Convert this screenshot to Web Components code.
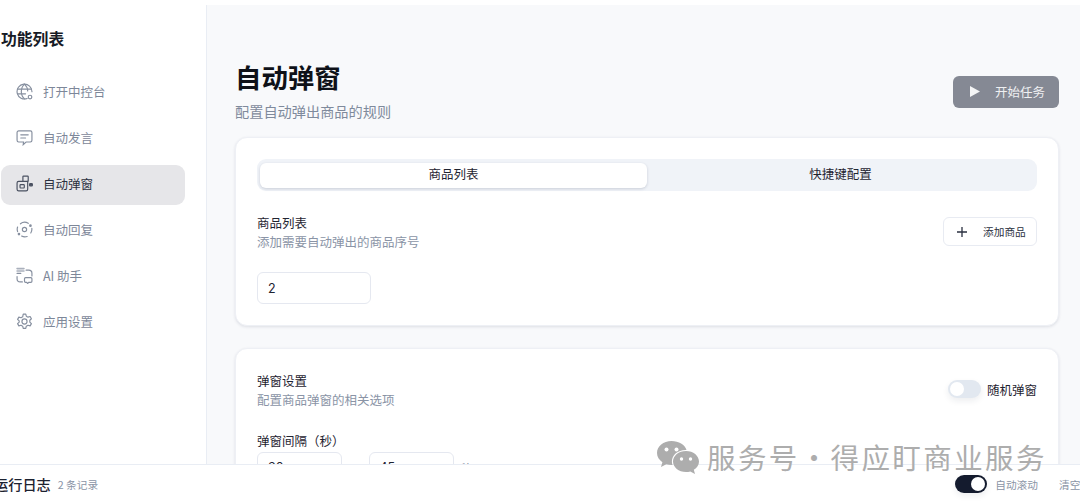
<!DOCTYPE html>
<html lang="zh-CN">
<head>
<meta charset="utf-8">
<title>自动弹窗</title>
<style>
  html, body { margin: 0; height: 100%; overflow: hidden; background: #fff; }
  body {
    font-family: "Noto Sans CJK SC", "Inter", "Noto Sans", sans-serif;
    color: #1a1f2e;
    --muted: #8a94a6;
    --line: #e9edf4;
  }
</style>
</head>
<body>
<app-shell>
  <side-nav slot="nav">
    <nav-item icon="globe">打开中控台</nav-item>
    <nav-item icon="chat">自动发言</nav-item>
    <nav-item icon="popup" active>自动弹窗</nav-item>
    <nav-item icon="reply">自动回复</nav-item>
    <nav-item icon="ai">AI 助手</nav-item>
    <nav-item icon="gear">应用设置</nav-item>
  </side-nav>
  <popup-page slot="main"></popup-page>
  <log-bar slot="log"></log-bar>
  <water-mark slot="mark"></water-mark>
</app-shell>

<script>
(function () {
  const icons = {
    globe: '<path d="M10.5 14.6A7 7 0 1 1 15 8.2"/><path d="M1.4 5.7h13.2M1.4 10.2h7.6M8 1C5.8 3 5 5.5 5 8s.8 5 3 7M8 1c2 1.900 3 4.200 3 6.500"/><circle cx="13.2" cy="13.2" r="1.7"/>',
    chat: '<path d="M2.5 1.8h11A1.500 1.500 0 0 1 15 3.300v7.400a1.500 1.500 0 0 1-1.500 1.500H9.500l-2.700 2.500.3-2.500H2.500A1.500 1.500 0 0 1 1 10.700V3.300a1.500 1.500 0 0 1 1.500-1.500z"/><path d="M4.500 5.500h7M4.500 8.500h4.500"/>',
    popup: '<rect x="6.5" y="1" width="5" height="5" rx=".6"/><path d="M6.5 6H2.500A1.500 1.500 0 0 0 1 7.500v6A1.500 1.500 0 0 0 2.500 15h7a1.500 1.500 0 0 0 1.500-1.500V6"/><rect x="3.8" y="9" width="4" height="3.2" rx=".6"/><rect x="12.8" y="8" width="2.6" height="2.2" rx=".6" fill="currentColor"/>',
    reply: '<circle cx="8" cy="8" r="2"/><path d="M4.200 2.600C6.200 1 9.200.8 11.500 2.200M14.900 6.800c.2 1.700-.2 3.200-1 4.500M10.500 14.600c-1.800.6-3.700.4-5.200-.4M1.500 10c-.5-1.500-.5-3 0-4.300"/><circle cx="13.6" cy="4.400" r=".7" fill="currentColor"/><circle cx="2.800" cy="12.300" r=".7" fill="currentColor"/>',
    ai: '<path d="M1 1.500h6.500M1 3.700h6.500" stroke-width="1.500" opacity=".7"/><path d="M1 6h3.500"/><path d="M9.500 3H12a3 3 0 0 1 3 3v2.500M1 9v2a3 3 0 0 0 3 3h2"/><path d="M9 10h5a1 1 0 0 1 1 1v2.500a1 1 0 0 1-1 1h-2l-1 1-1-1H9a1 1 0 0 1-1-1V11a1 1 0 0 1 1-1z"/>',
    gear: '<circle cx="8" cy="8" r="2.4"/><path stroke-linejoin="round" d="M6.800 1h2.400l.5 2 1.600.9 2-.6 1.200 2.100-1.500 1.400v1.800l1.500 1.400-1.200 2.100-2-.6-1.600.9-.5 2H6.800l-.5-2-1.600-.9-2 .6-1.200-2.100 1.500-1.400V7.400L1.500 6l1.200-2.100 2 .6 1.600-.9z"/>'
  };

  customElements.define('app-shell', class extends HTMLElement {
    constructor() {
      super();
      this.attachShadow({ mode: 'open' }).innerHTML = `
        <style>
          :host { display: flex; flex-direction: column; height: 501px; overflow: hidden; position: relative; padding-top: 5px; box-sizing: border-box; }
          .top { flex: 1; min-height: 0; display: flex; }
          ::slotted([slot=main]) { flex: 1; min-width: 0; }
        </style>
        <div class="top"><slot name="nav"></slot><slot name="main"></slot></div>
        <slot name="log"></slot>
        <slot name="mark"></slot>`;
    }
  });

  customElements.define('side-nav', class extends HTMLElement {
    constructor() {
      super();
      this.attachShadow({ mode: 'open' }).innerHTML = `
        <style>
          :host { display: block; width: 207px; flex: none; box-sizing: border-box; padding: 22px 21px 0 1px; border-right: 1px solid var(--line); background: #fff; }
          h2 { margin: 0 0 22px; font-size: 15.8px; line-height: 24px; font-weight: 700; color: #171b26; white-space: nowrap; }
          .list { display: flex; flex-direction: column; gap: 6px; }
        </style>
        <h2>功能列表</h2>
        <div class="list"><slot></slot></div>`;
    }
  });

  customElements.define('nav-item', class extends HTMLElement {
    constructor() {
      super();
      const on = this.hasAttribute('active');
      this.attachShadow({ mode: 'open' }).innerHTML = `
        <style>
          :host { display: flex; align-items: center; gap: 10px; box-sizing: border-box; height: 40px; padding: 0 0 4px 15px; border-radius: 9px;
            font-size: 12.5px; white-space: nowrap;
            color: ${on ? '#2a3040' : '#7d8799'}; background: ${on ? '#e6e6e9' : 'transparent'}; }
          svg { width: 17px; height: 17px; flex: none; fill: none; stroke: currentColor; stroke-width: 1.1; stroke-linecap: round; color: ${on ? '#4a5161' : '#868f9f'}; }
        </style>
        <svg viewBox="0 0 16 16">${icons[this.getAttribute('icon')]}</svg>
        <span><slot></slot></span>`;
    }
  });

  customElements.define('ui-card', class extends HTMLElement {
    constructor() {
      super();
      this.attachShadow({ mode: 'open' }).innerHTML = `
        <style>
          :host { display: block; flex: none; background: #fff; border: 1px solid #eef0f5; border-radius: 12px; padding: 21px; box-shadow: 0 1px 3px rgba(30,40,70,.12); }
        </style>
        <slot></slot>`;
    }
  });

  customElements.define('row-head', class extends HTMLElement {
    constructor() {
      super();
      this.attachShadow({ mode: 'open' }).innerHTML = `
        <style>
          :host { display: flex; align-items: center; justify-content: space-between; }
          h3 { margin: 0; font-size: 12.5px; line-height: 18px; font-weight: 400; color: #1f2431; }
          p { margin: 1px 0 0; font-size: 12.5px; line-height: 18px; color: var(--muted); }
        </style>
        <div><h3>${this.getAttribute('title')}</h3><p>${this.getAttribute('sub')}</p></div>
        <slot></slot>`;
    }
  });

  customElements.define('tab-bar', class extends HTMLElement {
    constructor() {
      super();
      this.attachShadow({ mode: 'open' }).innerHTML = `
        <style>
          :host { display: grid; grid-template-columns: 1fr 1fr; height: 32px; box-sizing: border-box; padding: 3.5px 3px; background: #f0f3f8; border-radius: 9px; font-size: 12.5px; color: #1f2431; margin-bottom: 23px; }
          div { display: flex; align-items: center; justify-content: center; border-radius: 6px; padding-bottom: 4px; box-sizing: border-box; }
          .on { background: #fff; box-shadow: 0 1px 3px rgba(30,40,70,.18); }
        </style>
        <div class="on">商品列表</div><div>快捷键配置</div>`;
    }
  });

  customElements.define('text-box', class extends HTMLElement {
    constructor() {
      super();
      this.attachShadow({ mode: 'open' }).innerHTML = `
        <style>
          :host { display: flex; align-items: center; flex: none; box-sizing: border-box; height: 32px; width: ${this.getAttribute('w')}px; padding-left: 10px; border: 1px solid #e5e8f0; border-radius: 6px; background: #fff; font-family: Inter, sans-serif; font-size: 12.5px; color: #1f2431; }
        </style>
        <slot></slot>`;
    }
  });

  customElements.define('toggle-switch', class extends HTMLElement {
    constructor() {
      super();
      const on = this.hasAttribute('on');
      this.attachShadow({ mode: 'open' }).innerHTML = `
        <style>
          :host { display: flex; align-items: center; flex: none; box-sizing: border-box; width: ${on ? 32 : 33}px; height: 18px; padding: 2px; border-radius: 9px;
            justify-content: ${on ? 'flex-end' : 'flex-start'}; background: ${on ? '#141b2e' : '#e2e8f0'}; box-shadow: 0 3px 6px rgba(30,40,70,.08); }
          i { width: 14px; height: 14px; border-radius: 50%; background: #fff; }
        </style>
        <i></i>`;
    }
  });

  customElements.define('popup-page', class extends HTMLElement {
    constructor() {
      super();
      this.attachShadow({ mode: 'open' }).innerHTML = `
        <style>
          :host { display: flex; flex-direction: column; gap: 22px; box-sizing: border-box; min-height: 0; overflow: hidden; padding: 53px 21px 0 28px; background: #f8f9fb; }
          header { display: flex; align-items: center; justify-content: space-between; margin-bottom: -6px; }
          h1 { margin: 0; font-size: 26.4px; line-height: 38px; font-weight: 700; color: #0e1118; }
          .sub { margin: 5px 0 0; font-size: 14.2px; line-height: 20px; color: #7f8a9c; }
          button { font: inherit; }
          .start { display: flex; align-items: center; gap: 15px; width: 106px; height: 32px; padding: 0 0 2px 17px; box-sizing: border-box; border: 0; border-radius: 6px; background: #858994; color: #eff0f2; font-size: 12.5px; margin-top: 5px; }
          .start svg { width: 10px; height: 11px; fill: #f4f5f6; }
          .add { display: flex; align-items: center; gap: 16px; height: 29px; width: 94px; padding: 0 0 0 13px; box-sizing: border-box; border: 1px solid #e8ebf2; border-radius: 6px; background: #fff; color: #2a3040; font-size: 10.7px; margin-bottom: 2px; }
          .add svg { width: 10px; height: 10px; stroke: #2a3040; stroke-width: 1.3; }
          .rand { display: flex; align-items: center; gap: 6px; font-size: 12.5px; color: #1f2431; white-space: nowrap; margin-bottom: 3px; }
          .field { display: block; margin-top: 23px; font-size: 12.5px; line-height: 18px; color: #1f2431; }
          .pair { display: flex; align-items: center; margin-top: 2px; font-size: 12.5px; color: #7d8799; }
          .pair span { margin: 0 6px 0 8px; }
          .pair span:last-child { margin-left: 6px; }
          .pair text-box { padding-bottom: 2px; }
          .first { margin-top: 21px; }
          .second { padding-top: 23px; }
        </style>
        <header>
          <div>
            <h1>自动弹窗</h1>
            <p class="sub">配置自动弹出商品的规则</p>
          </div>
          <button class="start"><svg viewBox="0 0 10 11"><path d="M0 0l10 5.5L0 11z"/></svg>开始任务</button>
        </header>
        <ui-card>
          <tab-bar></tab-bar>
          <row-head title="商品列表" sub="添加需要自动弹出的商品序号">
            <button class="add"><svg viewBox="0 0 10 10"><path d="M5 0v10M0 5h10"/></svg>添加商品</button>
          </row-head>
          <text-box class="first" w="114">2</text-box>
        </ui-card>
        <ui-card class="second">
          <row-head title="弹窗设置" sub="配置商品弹窗的相关选项">
            <div class="rand"><toggle-switch></toggle-switch>随机弹窗</div>
          </row-head>
          <span class="field">弹窗间隔（秒）</span>
          <div class="pair">
            <text-box w="85">30</text-box><span>至</span><text-box w="85">45</text-box><span>秒</span>
          </div>
        </ui-card>`;
    }
  });

  customElements.define('log-bar', class extends HTMLElement {
    constructor() {
      super();
      this.attachShadow({ mode: 'open' }).innerHTML = `
        <style>
          :host { display: flex; flex: none; align-items: center; justify-content: space-between; height: 37px; box-sizing: border-box; border-top: 1px solid var(--line); background: #fff; padding-top: 2px; overflow: hidden; position: relative; }
          .left { display: flex; align-items: center; gap: 7px; margin-left: -6px; }
          b { font-size: 14.2px; font-weight: 500; color: #1d2230; white-space: nowrap; }
          .n { font-size: 10.7px; color: var(--muted); white-space: nowrap; }
          .right { display: flex; align-items: center; gap: 8px; font-size: 10.7px; color: var(--muted); white-space: nowrap; margin-right: -1px; }
          .clear { margin-left: 13px; width: 22px; overflow: hidden; }
        </style>
        <div class="left"><b>运行日志</b><span class="n">2 条记录</span></div>
        <div class="right"><toggle-switch on></toggle-switch>自动滚动<span class="clear">清空</span></div>`;
    }
  });

  customElements.define('water-mark', class extends HTMLElement {
    constructor() {
      super();
      this.attachShadow({ mode: 'open' }).innerHTML = `
        <style>
          :host { position: absolute; left: 657px; top: 440px; display: flex; align-items: center; gap: 8px; color: #adadad; pointer-events: none; white-space: nowrap; }
          svg { width: 42px; height: 34px; flex: none; }
          span { font-size: 28.5px; line-height: 34px; letter-spacing: 2.4px; word-spacing: -8.8px; padding-bottom: 2px; }
        </style>
        <svg viewBox="0 0 42 34">
          <path fill="#adadad" d="M14.5 0C6.5 0 0 5.300 0 12c0 3.800 2.100 7 5.400 9.200L4 26l5.300-2.800c1.600.4 3.400.7 5.200.7h1c-.4-1.200-.6-2.300-.6-3.500 0-6.400 6-11.500 13.600-11.500h1C27.900 3.800 21.800 0 14.500 0z"/>
          <circle cx="9.5" cy="8.5" r="2" fill="#fff"/><circle cx="19.5" cy="8.5" r="2" fill="#fff"/>
          <path fill="#adadad" d="M42 20.500C42 14.700 36.300 10 29 10s-13 4.700-13 10.500S21.700 31 29 31c1.500 0 2.900-.2 4.300-.6L38 33l-1.200-4.200c3.200-2 5.200-4.900 5.200-8.300z"/>
          <circle cx="24.5" cy="18" r="1.700" fill="#fff"/><circle cx="33.5" cy="18" r="1.700" fill="#fff"/>
        </svg>
        <span>服务号 · 得应盯商业服务</span>`;
    }
  });
})();
</script>
</body>
</html>
